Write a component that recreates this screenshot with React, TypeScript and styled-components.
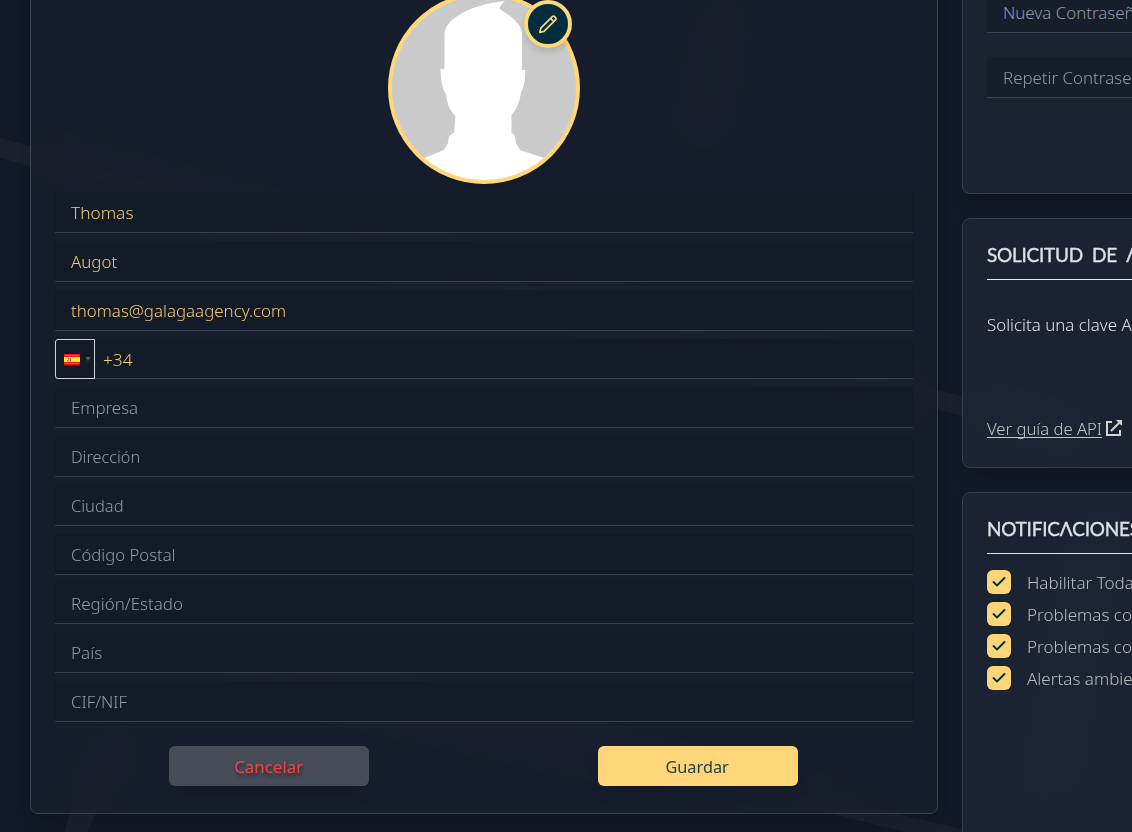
import React from "react";
import styled, { createGlobalStyle } from "styled-components";

const Global = createGlobalStyle`
  * { box-sizing: border-box; }
  body {
    margin: 0;
    overflow: hidden;
    background: #111827;
    font-family: "Noto Sans", "Open Sans", sans-serif;
    font-weight: 360;
    font-size: 16px;
  }
`;

const Page = styled.main`
  position: relative;
  width: 1132px;
  height: 832px;
  overflow: hidden;
  background: #111827;
`;

const Backdrop = styled.svg`
  position: absolute;
  inset: 0;
`;

const Columns = styled.div`
  display: flex;
  gap: 24px;
  width: 1400px;
  padding-left: 30px;
`;

const Card = styled.section`
  position: relative;
  border: 1px solid #374151;
  border-radius: 8px;
  box-shadow: 0 10px 15px -3px rgba(0, 0, 0, 0.1), 0 4px 6px -4px rgba(0, 0, 0, 0.1);
  backdrop-filter: blur(16px);
`;

const ProfileCard = styled(Card)`
  width: 908px;
  height: 854px;
  margin-top: -40px;
  padding: 31px 24px 0;
  background: rgba(26, 34, 48, 0.6);
`;

const SideColumn = styled.div`
  display: flex;
  flex-direction: column;
  gap: 24px;
  width: 400px;
  margin-top: -40px;
`;

const SideCard = styled(Card)<{ $height: number }>`
  height: ${(p) => p.$height}px;
  padding: 24px;
  background: rgba(28, 37, 51, 0.92);
`;

const AvatarWrap = styled.div`
  position: relative;
  width: 192px;
  height: 192px;
  margin: 0 auto 8px;
`;

const Avatar = styled.div`
  width: 192px;
  height: 192px;
  border: 4px solid #ffd778;
  border-radius: 50%;
  background: #cacaca;
  overflow: hidden;
  box-shadow: 0 4px 6px rgba(0, 0, 0, 0.1);

  svg { display: block; }
`;

const EditButton = styled.button`
  position: absolute;
  top: 8px;
  right: 8px;
  display: flex;
  align-items: center;
  justify-content: center;
  width: 48px;
  height: 48px;
  padding: 0;
  border: 4px solid #ffd778;
  border-radius: 50%;
  background: #032c3e;
  color: #ffd778;
  box-shadow: 0 4px 6px rgba(0, 0, 0, 0.12);
`;

const Fields = styled.div`
  display: flex;
  flex-direction: column;
  gap: 8px;
`;

const Field = styled.div<{ $filled?: boolean }>`
  display: flex;
  align-items: center;
  height: 41px;
  padding: 2px 16px 0;
  border-bottom: 1px solid #374151;
  background: rgba(19, 25, 39, 0.6);
  color: ${(p) => (p.$filled ? "#f0cb75" : "#949ba8")};
`;

const PasswordField = styled(Field)`
  background: #161d2b;
`;

const PhoneField = styled(Field)`
  height: 40px;
  padding: 0;
  gap: 8px;
`;

const CountryPicker = styled.div`
  display: flex;
  align-items: center;
  gap: 5px;
  width: 40px;
  height: 40px;
  padding: 1px 0 0 8px;
  border: 1px solid #d1d5db;
  border-radius: 3px 0 0 3px;
`;

const Caret = styled.span`
  border-left: 3px solid transparent;
  border-right: 3px solid transparent;
  border-top: 4px solid #555;
`;

const Label = styled.span<{ $stretch?: number; $centered?: boolean }>`
  display: inline-block;
  transform: scaleX(${(p) => p.$stretch ?? 1.055});
  transform-origin: ${(p) => (p.$centered ? "center" : "left")};
  white-space: nowrap;
`;

const SoftLabel = styled(Label)`
  opacity: 0.99;
`;

const PhoneNumber = styled(Label)`
  padding-top: 3px;
`;

const Actions = styled.div`
  display: flex;
  justify-content: space-around;
  margin: 24px 1px 0 -1px;
`;

const Button = styled.button<{ $primary?: boolean }>`
  width: 200px;
  height: 40px;
  padding: 2px 0 0;
  border: 0;
  border-radius: 6px;
  font: inherit;
  font-weight: 400;
  color: ${(p) => (p.$primary ? "#1f4148" : "#ef4444")};
  background: ${(p) => (p.$primary ? "#ffd57a" : "#474d58")};
  text-shadow: ${(p) => (p.$primary ? "none" : "1px 3px 3px rgba(0, 0, 0, 0.5)")};
  box-shadow: 0 10px 15px -3px rgba(0, 0, 0, 0.1);
`;

const PasswordStack = styled.div`
  display: flex;
  flex-direction: column;
  gap: 24px;
  margin-top: 7px;
`;

const Heading = styled.h2`
  height: 37px;
  margin: 0;
  border-bottom: 1px solid #e5e7eb;
  font-family: "Lato", sans-serif;
  font-size: 19px;
  font-weight: 400;
  line-height: 23px;
  letter-spacing: -0.25px;
  word-spacing: 4.5px;
  color: #dfe1e5;
  -webkit-text-stroke: 0.35px #dfe1e5;
  white-space: nowrap;
`;

const Body = styled.p`
  margin: 33px 0 0;
  line-height: 24px;
  color: #e0e2e6;
  white-space: nowrap;
`;

const GuideLink = styled.a`
  display: flex;
  gap: 7px;
  margin-top: 80px;
  line-height: 24px;
  color: #c3c5c8;

  span {
    text-decoration: underline;
    text-decoration-thickness: 1px;
    text-decoration-skip-ink: none;
    text-underline-offset: 2px;
  }

  svg { margin-top: 2px; }
`;

const CheckList = styled.ul`
  display: flex;
  flex-direction: column;
  gap: 8px;
  margin: 16px 0 0;
  padding: 0;
  list-style: none;
`;

const CheckRow = styled.li`
  display: flex;
  gap: 16px;
  height: 24px;
  line-height: 27px;
  color: #b9bcc1;
`;

const CheckBox = styled.span`
  display: flex;
  align-items: center;
  justify-content: center;
  width: 24px;
  height: 24px;
  border-radius: 6px;
  background: #ffd57a;
`;

const Silhouette = () => (
  <svg width="184" height="184" viewBox="392 -4 184 184" aria-hidden="true">
    <path
      fill="#fff"
      d="M505 1C486 3 469 8 459 15C449 21 445 27 444.500 34V69H440.500C441 81 442 88 446 94C447 104 450 111 455.500 116L454 133C449 134 449 137 448 143L444 150L424 158V185H544V158L520 150L516 143C515 137 515 134 511.500 133V115C517 109 520 101 521 92C524 88 525 80 525.500 70H522V33C521 24 513 17 499.500 9Q500 5 505 1Z"
    />
  </svg>
);

const Pencil = () => (
  <svg width="20" height="20" viewBox="0 0 20 20" fill="none" stroke="currentColor" strokeWidth="1.700" strokeLinejoin="round" aria-hidden="true">
    <path d="M1.800 18.300L2.800 14.200L14.300 2.700Q15.500 1.500 16.700 2.700L17.500 3.500Q18.700 4.700 17.500 5.900L6 17.400ZM12.600 4.400L15.800 7.600" />
  </svg>
);

const Flag = () => (
  <svg width="16" height="11" viewBox="0 0 16 11" aria-hidden="true">
    <path fill="#f21616" d="M0 0H16V11H0Z" />
    <path fill="#ff4a4a" d="M1 1H15V2H1ZM1 9H15V10H1Z" />
    <path fill="#ffee20" d="M0 3H16V8H0Z" />
    <path fill="#e9a08a" d="M4 4H7V8H4Z" />
    <path fill="#c9443c" d="M4 4H5V5H4ZM6 5H7V7H6ZM3 6H4V7H3Z" />
  </svg>
);

const ExternalLink = () => (
  <svg width="18" height="18" viewBox="0 0 18 18" fill="none" stroke="#d3d3cf" strokeWidth="2" aria-hidden="true">
    <path d="M7 3H2V16H15V11M6 12L15 3" />
    <path d="M11 1H17V7Z" fill="#d3d3cf" stroke="none" />
  </svg>
);

const Check = () => (
  <svg width="14" height="10" viewBox="0 0 14 10" fill="none" stroke="#032c3e" strokeWidth="1.800" strokeLinecap="round" strokeLinejoin="round" aria-hidden="true">
    <path d="M1.500 5L5 8.500L12.500 1" />
  </svg>
);

const fields: Array<{ text: string; stretch?: number; filled?: boolean; phone?: boolean }> = [
  { text: "Thomas", filled: true, stretch: 1.08 },
  { text: "Augot", filled: true },
  { text: "thomas@galagaagency.com", filled: true },
  { text: "+34", filled: true, phone: true, stretch: 1.08 },
  { text: "Empresa" },
  { text: "Dirección", stretch: 1.02 },
  { text: "Ciudad", stretch: 1.03 },
  { text: "Código Postal", stretch: 1.045 },
  { text: "Región/Estado", stretch: 1.06 },
  { text: "País", stretch: 1.07 },
  { text: "CIF/NIF", stretch: 1.05 },
];

const notifications = ["Habilitar Todas", "Problemas con", "Problemas con", "Alertas ambientales"];

export default function App() {
  return (
    <Page>
      <Global />
      <Backdrop width="1132" height="832" viewBox="0 0 1132 832" aria-hidden="true">
        <g fill="#1a202e">
          <path d="M0 138L1080 428V448L0 158Z" />
          <path d="M240 660L962 829V846L820 811L240 680Z" />
          <path d="M112 740H130L87 832H64L70 814Z" />
          <path d="M1095 510L1115 514L1062 780L1035 792Z" />
          <path d="M715 0H737L712 130H690Z" />
        </g>
      </Backdrop>
      <Columns>
        <ProfileCard>
          <AvatarWrap>
            <Avatar><Silhouette /></Avatar>
            <EditButton aria-label="Editar"><Pencil /></EditButton>
          </AvatarWrap>
          <Fields>
            {fields.map((f) =>
              f.phone ? (
                <PhoneField key={f.text} $filled>
                  <CountryPicker><Flag /><Caret /></CountryPicker>
                  <PhoneNumber $stretch={f.stretch}>{f.text}</PhoneNumber>
                </PhoneField>
              ) : (
                <Field key={f.text} $filled={f.filled}>
                  <Label $stretch={f.stretch}>{f.text}</Label>
                </Field>
              )
            )}
          </Fields>
          <Actions>
            <Button><Label $centered>Cancelar</Label></Button>
            <Button $primary><Label $centered $stretch={1.02}>Guardar</Label></Button>
          </Actions>
        </ProfileCard>
        <SideColumn>
          <SideCard $height={234}>
            <PasswordStack>
              <PasswordField><SoftLabel>Nueva Contraseña</SoftLabel></PasswordField>
              <PasswordField><SoftLabel>Repetir Contraseña</SoftLabel></PasswordField>
            </PasswordStack>
          </SideCard>
          <SideCard $height={250}>
            <Heading>SOLICITUD DE ΛPI</Heading>
            <Body><Label>Solicita una clave API</Label></Body>
            <GuideLink><Label $stretch={1.04}>Ver guía de API</Label><ExternalLink /></GuideLink>
          </SideCard>
          <SideCard $height={380}>
            <Heading>NOTIFICΛCIONES</Heading>
            <CheckList>
              {notifications.map((text, i) => (
                <CheckRow key={i}>
                  <CheckBox><Check /></CheckBox>
                  <Label $stretch={1.065}>{text}</Label>
                </CheckRow>
              ))}
            </CheckList>
          </SideCard>
        </SideColumn>
      </Columns>
    </Page>
  );
}
